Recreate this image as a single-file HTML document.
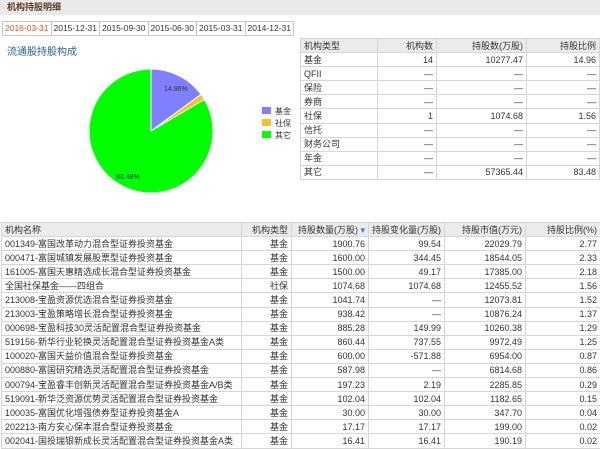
<!DOCTYPE html>
<html><head><meta charset="utf-8"><style>
*{margin:0;padding:0;box-sizing:border-box}
body{width:600px;height:448px;background:#fff;font-family:"Liberation Sans","Noto Sans CJK SC",sans-serif;font-size:9px;color:#333;position:relative;overflow:hidden}
.title{position:absolute;left:0;top:0;width:600px;height:15px;background:#e9e9e9;font-weight:bold;color:#5a3a1a;padding-left:7px;line-height:15px;font-size:9px}
.tabs{position:absolute;left:2px;top:21px;height:15px;display:flex}
.tabs div{width:49.5px;height:15px;border:1px solid #c8c8c8;margin-right:-1px;text-align:center;line-height:13px;font-size:8.5px;color:#333;background:#fff}
.tabs div.a{color:#e8541e}
.sub{position:absolute;left:7px;top:43px;color:#2a6496;font-size:10px}
table{position:absolute;border-collapse:collapse;table-layout:fixed}
td{border:1px solid #d6d6d6;padding:0 3px;white-space:nowrap;overflow:hidden;height:14.1px;line-height:12px}
tr.h td{background:#ebebeb}
.r{text-align:right}
</style></head><body>
<div class="title">机构持股明细</div>
<div class="tabs"><div class="a">2016-03-31</div><div>2015-12-31</div><div>2015-09-30</div><div>2015-06-30</div><div>2015-03-31</div><div>2014-12-31</div></div>
<div class="sub">流通股持股构成</div>
<svg style="position:absolute;left:0;top:0" width="300" height="215">
<path d="M151,131 L151,69 A62,62 0 0 1 201.1,94.4 Z" fill="#8080ff" stroke="#fff" stroke-width="1"/>
<path d="M151,131 L201.1,94.4 A62,62 0 0 1 204.4,99.5 Z" fill="#f5c030" stroke="#fff" stroke-width="1"/>
<path d="M151,131 L204.4,99.5 A62,62 0 1 1 151,69 Z" fill="#00ff00" stroke="#fff" stroke-width="1"/>
<text x="164" y="91" font-size="7" fill="#333" font-family="Liberation Sans">14.96%</text>
<text x="116" y="179" font-size="7" fill="#333" font-family="Liberation Sans">83.48%</text>
<rect x="262" y="107" width="9" height="7" fill="#8080ff"/>
<rect x="262" y="119" width="9" height="7" fill="#f5c030"/>
<rect x="262" y="131" width="9" height="7" fill="#00ff00"/>
<text x="275" y="114" font-size="8" fill="#333">基金</text>
<text x="275" y="126" font-size="8" fill="#333">社保</text>
<text x="275" y="138" font-size="8" fill="#333">其它</text>
</svg>
<table style="left:300px;top:38px;width:299px">
<colgroup><col style="width:77px"><col style="width:59px"><col style="width:90px"><col style="width:73px"></colgroup>
<tr class="h"><td>机构类型</td><td class="r">机构数</td><td class="r">持股数(万股)</td><td class="r">持股比例</td></tr>
<tr><td>基金</td><td class="r">14</td><td class="r">10277.47</td><td class="r">14.96</td></tr>
<tr><td>QFII</td><td class="r">—</td><td class="r">—</td><td class="r">—</td></tr>
<tr><td>保险</td><td class="r">—</td><td class="r">—</td><td class="r">—</td></tr>
<tr><td>券商</td><td class="r">—</td><td class="r">—</td><td class="r">—</td></tr>
<tr><td>社保</td><td class="r">1</td><td class="r">1074.68</td><td class="r">1.56</td></tr>
<tr><td>信托</td><td class="r">—</td><td class="r">—</td><td class="r">—</td></tr>
<tr><td>财务公司</td><td class="r">—</td><td class="r">—</td><td class="r">—</td></tr>
<tr><td>年金</td><td class="r">—</td><td class="r">—</td><td class="r">—</td></tr>
<tr><td>其它</td><td class="r">—</td><td class="r">57365.44</td><td class="r">83.48</td></tr>
</table>
<table style="left:1px;top:222px;width:599px">
<colgroup><col style="width:240px"><col style="width:50px"><col style="width:77px"><col style="width:76px"><col style="width:81px"><col style="width:75px"></colgroup>
<tr class="h"><td>机构名称</td><td class="r">机构类型</td><td class="r">持股数量(万股) <span style="color:#3a7bd5">▾</span></td><td class="r">持股变化量(万股)</td><td class="r">持股市值(万元)</td><td class="r">持股比例(%)</td></tr>
<tr><td>001349-富国改革动力混合型证券投资基金</td><td class="r">基金</td><td class="r">1900.76</td><td class="r">99.54</td><td class="r">22029.79</td><td class="r">2.77</td></tr>
<tr><td>000471-富国城镇发展股票型证券投资基金</td><td class="r">基金</td><td class="r">1600.00</td><td class="r">344.45</td><td class="r">18544.05</td><td class="r">2.33</td></tr>
<tr><td>161005-富国天惠精选成长混合型证券投资基金</td><td class="r">基金</td><td class="r">1500.00</td><td class="r">49.17</td><td class="r">17385.00</td><td class="r">2.18</td></tr>
<tr><td>全国社保基金——四组合</td><td class="r">社保</td><td class="r">1074.68</td><td class="r">1074.68</td><td class="r">12455.52</td><td class="r">1.56</td></tr>
<tr><td>213008-宝盈资源优选混合型证券投资基金</td><td class="r">基金</td><td class="r">1041.74</td><td class="r">—</td><td class="r">12073.81</td><td class="r">1.52</td></tr>
<tr><td>213003-宝盈策略增长混合型证券投资基金</td><td class="r">基金</td><td class="r">938.42</td><td class="r">—</td><td class="r">10876.24</td><td class="r">1.37</td></tr>
<tr><td>000698-宝盈科技30灵活配置混合型证券投资基金</td><td class="r">基金</td><td class="r">885.28</td><td class="r">149.99</td><td class="r">10260.38</td><td class="r">1.29</td></tr>
<tr><td>519156-新华行业轮换灵活配置混合型证券投资基金A类</td><td class="r">基金</td><td class="r">860.44</td><td class="r">737.55</td><td class="r">9972.49</td><td class="r">1.25</td></tr>
<tr><td>100020-富国天益价值混合型证券投资基金</td><td class="r">基金</td><td class="r">600.00</td><td class="r">-571.88</td><td class="r">6954.00</td><td class="r">0.87</td></tr>
<tr><td>000880-富国研究精选灵活配置混合型证券投资基金</td><td class="r">基金</td><td class="r">587.98</td><td class="r">—</td><td class="r">6814.68</td><td class="r">0.86</td></tr>
<tr><td>000794-宝盈睿丰创新灵活配置混合型证券投资基金A/B类</td><td class="r">基金</td><td class="r">197.23</td><td class="r">2.19</td><td class="r">2285.85</td><td class="r">0.29</td></tr>
<tr><td>519091-新华泛资源优势灵活配置混合型证券投资基金</td><td class="r">基金</td><td class="r">102.04</td><td class="r">102.04</td><td class="r">1182.65</td><td class="r">0.15</td></tr>
<tr><td>100035-富国优化增强债券型证券投资基金A</td><td class="r">基金</td><td class="r">30.00</td><td class="r">30.00</td><td class="r">347.70</td><td class="r">0.04</td></tr>
<tr><td>202213-南方安心保本混合型证券投资基金</td><td class="r">基金</td><td class="r">17.17</td><td class="r">17.17</td><td class="r">199.00</td><td class="r">0.02</td></tr>
<tr><td>002041-国投瑞银新成长灵活配置混合型证券投资基金A类</td><td class="r">基金</td><td class="r">16.41</td><td class="r">16.41</td><td class="r">190.19</td><td class="r">0.02</td></tr>
</table>
</body></html>
